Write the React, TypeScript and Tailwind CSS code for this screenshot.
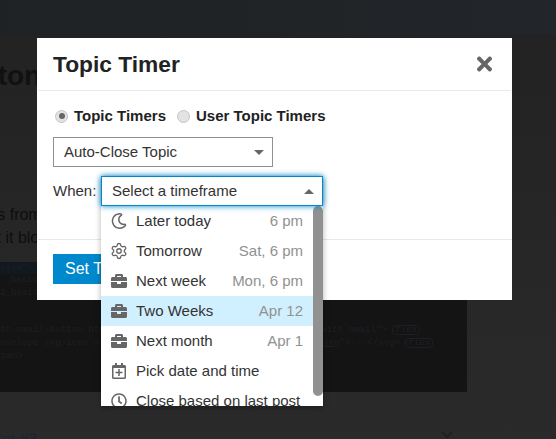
import { FaBriefcase, FaRegCalendarPlus, FaRegClock, FaRegMoon, FaTimes } from 'react-icons/fa'
import { Settings } from 'lucide-react'
import type { ReactNode } from 'react'

interface Option {
  icon: ReactNode
  label: string
  time?: string
  active?: boolean
}

const iconClass = 'w-4 h-4 text-[#666666]'

const options: Option[] = [
  { icon: <FaRegMoon className={iconClass} />, label: 'Later today', time: '6 pm' },
  { icon: <Settings className="w-[18px] h-[18px] -ml-px text-[#666666]" strokeWidth={1.75} />, label: 'Tomorrow', time: 'Sat, 6 pm' },
  { icon: <FaBriefcase className={iconClass} />, label: 'Next week', time: 'Mon, 6 pm' },
  { icon: <FaBriefcase className={iconClass} />, label: 'Two Weeks', time: 'Apr 12', active: true },
  { icon: <FaBriefcase className={iconClass} />, label: 'Next month', time: 'Apr 1' },
  { icon: <FaRegCalendarPlus className={iconClass} />, label: 'Pick date and time' },
  { icon: <FaRegClock className={iconClass} />, label: 'Close based on last post' },
]

function Caret({ up }: { up?: boolean }) {
  return (
    <span
      className={`w-0 h-0 border-x-[5px] border-x-transparent ${
        up ? 'border-b-[5px] border-b-[#666666]' : 'border-t-[5px] border-t-[#666666]'
      }`}
    />
  )
}

function Badge({ children }: { children: ReactNode }) {
  return <span className="ml-[5px] px-[2px] h-[10px] border border-[#1d1f24] rounded-sm leading-[8px]">{children}</span>
}

function Background() {
  return (
    <div className="absolute inset-0 overflow-hidden bg-gradient-to-b from-[#222222] to-[#2a2a2a] text-[#111111]">
      <div className="h-[35px] bg-gradient-to-r from-[#1f2224] to-[#22262a]" />
      <div className="pt-[23px] h-[227px] flex flex-col">
        <div className="-ml-[49px] text-[28px] leading-9 font-bold">Button</div>
        <div className="mt-[109px] text-base leading-[23px] text-[#0e0e0e] whitespace-nowrap">
          <div className="-ml-[41px]">Issues from</div>
          <div className="-ml-[23px]">But it blocks</div>
        </div>
      </div>
      <div className="w-[467px] h-[130px] bg-[#141414] font-['Liberation_Mono',monospace] text-[9.2px] leading-[13px] text-[#1d1f24] overflow-hidden whitespace-nowrap">
        <div className="h-[12px] leading-[12px] bg-[#111820] -mb-px">view"&gt;</div>
        <div className="ml-[5px]">_basic"</div>
        <div>2_basic</div>
        <div className="mt-[24px] flex items-center">
          <span className="w-[321px] shrink-0">th-email-button btn</span>
          <span>with email"&gt;</span>
          <Badge>flex</Badge>
        </div>
        <div className="flex items-center">
          <span className="w-[323px] shrink-0">nvelope svg-icon sv</span>
          <span>
            <span className="underline">svg</span>"&gt;···&lt;/svg&gt;
          </span>
          <Badge>flex</Badge>
        </div>
        <div className="ml-[1px]">pan&gt;</div>
      </div>
      <div className="mt-[38px] -ml-[9px] text-base leading-5 text-[#1a2633]">Set #3</div>
      <svg className="absolute left-[441px] top-[431px] w-[12px] h-[7px] text-[#212121]" viewBox="0 0 12 7" fill="none" stroke="currentColor" strokeWidth="2">
        <path d="M1 1l5 5 5-5" />
      </svg>
    </div>
  )
}

export default function App() {
  return (
    <div className="relative w-[556px] h-[439px] overflow-hidden font-['Liberation_Sans',sans-serif]">
      <Background />

      {/* Modal */}
      <div className="absolute left-[37px] top-[38px] w-[475px] h-[262px] bg-white text-[#222222]">
        <div className="flex items-center justify-between h-[53px] mx-px border-b border-[#e9e9e9] pl-[15px] pr-[17px]">
          <h1 className="text-[22.75px] font-bold leading-[54px]">Topic Timer</h1>
          <FaTimes className="w-[19px] h-[22px] text-[#666666]" />
        </div>

        <div className="h-[149px] ml-px border-b border-[#e9e9e9] pl-[15px] pr-4 pt-[14px]">
          <div className="flex items-center h-[22px] text-[15px] font-bold">
            <span className="flex items-center justify-center w-[13px] h-[13px] ml-[2px] rounded-full bg-[#e3e3e3] border border-[#c4c4c4]">
              <span className="w-1.5 h-1.5 rounded-full bg-[#666666]" />
            </span>
            <span className="ml-[6px]">Topic Timers</span>
            <span className="w-[13px] h-[13px] ml-[11px] rounded-full bg-[#e3e3e3] border border-[#c4c4c4]" />
            <span className="ml-[6px]">User Topic Timers</span>
          </div>

          <div className="flex items-center justify-between w-[220px] h-[30px] mt-[10px] pl-[10px] pr-[8px] border border-[#919191] text-[15px] text-[#333333]">
            Auto-Close Topic
            <Caret />
          </div>

          <div className="flex items-center mt-[9px] text-[15px] h-[30px] text-[#333333]">When:</div>
        </div>

        <div className="pt-[14px] pl-4">
          <button className="h-[30px] w-[120px] bg-[#0088cc] text-white text-base text-left pl-3">Set Timer</button>
        </div>
      </div>

      {/* Timeframe dropdown */}
      <div className="absolute left-[101px] top-[176px] w-[222px] shadow-[0_2px_6px_rgba(0,0,0,0.3)]">
        <div className="flex items-center justify-between h-[30px] pt-px pl-[10px] pr-[8px] bg-white border border-[#0088cc] shadow-[0_0_6px_#0088cc] text-[15px] text-[#333333] relative z-10">
          Select a timeframe
          <Caret up />
        </div>
        <div className="relative h-[200px] overflow-hidden bg-white">
          {options.map(o => (
            <div
              key={o.label}
              className={`flex items-center h-[30px] pl-[10px] pr-[20px] text-[15px] whitespace-nowrap ${
                o.active ? 'bg-[#d1f0ff]' : ''
              }`}
            >
              <span className="w-[25px] shrink-0">{o.icon}</span>
              <span className="text-[#333333]">{o.label}</span>
              {o.time && <span className="ml-auto text-[#919191]">{o.time}</span>}
            </div>
          ))}
          <div className="absolute right-0 top-0 w-[10px] h-[190px] rounded-[5px] bg-[#919191]" />
        </div>
      </div>
    </div>
  )
}
